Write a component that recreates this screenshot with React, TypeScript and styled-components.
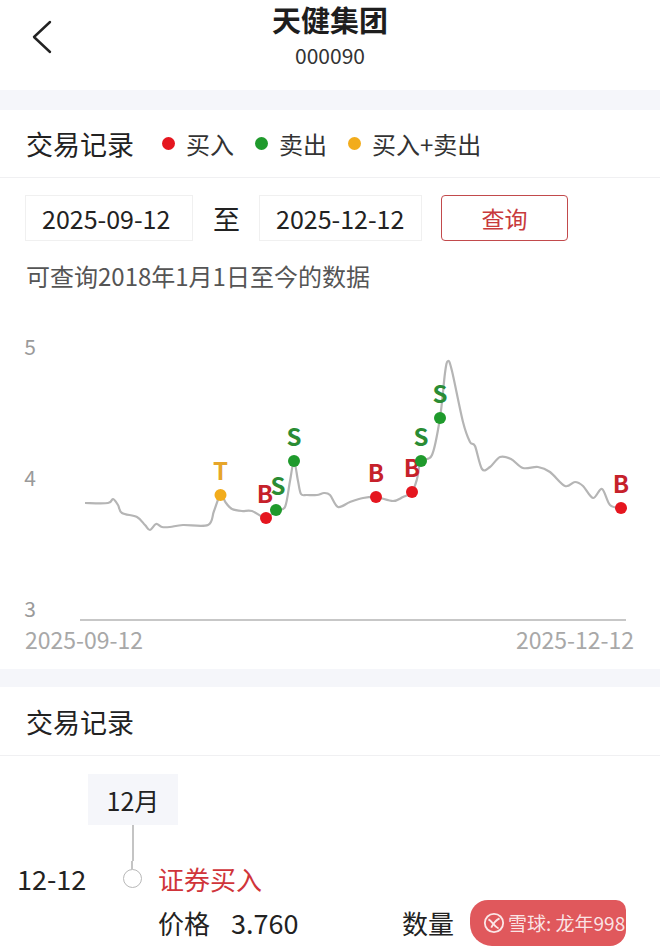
import { createGlobalStyle, styled } from 'styled-components';

const GlobalStyle = createGlobalStyle`
  body {
    margin: 0;
    background: #fff;
    font-family: "Noto Sans CJK SC", "Noto Sans", sans-serif;
    color: #222;
    overflow: hidden;
  }
`;

const Page = styled.div`
  width: 660px;
`;

const Header = styled.div`
  height: 90px;
  display: grid;
  grid-template-columns: 1fr auto 1fr;
  align-items: start;
`;

const Back = styled.div`
  padding: 20px 0 0 31px;
`;

const TitleBox = styled.div`
  display: flex;
  flex-direction: column;
  align-items: center;
  padding-top: 2px;
`;

const Title = styled.div`
  font-size: 29px;
  line-height: 34px;
  font-weight: 700;
  color: #1e1e1e;
`;

const Code = styled.div`
  font-size: 21px;
  line-height: 26px;
  margin-top: 6px;
  color: #333;
`;

const Band = styled.div<{ $h: number }>`
  height: ${(p) => p.$h}px;
  background: #f5f6fa;
`;

const SectionHead = styled.div<{ $h: number }>`
  height: ${(p) => p.$h}px;
  padding: 0 26px;
  display: flex;
  align-items: center;
  border-bottom: 1px solid #f0f0f2;
  box-sizing: border-box;
`;

const SectionTitle = styled.div`
  font-size: 27px;
  color: #222;
  margin-right: 28px;
`;

const Legend = styled.div`
  display: flex;
  align-items: center;
  margin-right: 21px;
  font-size: 24px;
  color: #333;
`;

const Dot = styled.span<{ $c: string }>`
  width: 13px;
  height: 13px;
  border-radius: 50%;
  background: ${(p) => p.$c};
  margin-right: 11px;
`;

const DateRow = styled.div`
  display: flex;
  align-items: center;
  padding: 17px 25px 0;
`;

const DateInput = styled.div<{ $w: number }>`
  width: ${(p) => p.$w}px;
  height: 46px;
  box-sizing: border-box;
  border: 1px solid #f0f0f0;
  display: flex;
  align-items: center;
  padding-left: 16px;
  font-size: 25px;
  color: #222;
`;

const To = styled.div`
  font-size: 27px;
  margin: 0 19px 0 20px;
  color: #222;
`;

const QueryButton = styled.button`
  margin-left: 19px;
  width: 127px;
  height: 46px;
  border: 1.5px solid #c24a4c;
  border-radius: 4px;
  background: #fff;
  color: #c83a3c;
  font-family: inherit;
  font-size: 23px;
`;

const Hint = styled.div`
  padding-left: 26px;
  margin-top: 18px;
  line-height: 34px;
  font-size: 24px;
  color: #555;
`;

const Chart = styled.svg`
  display: block;
`;

const Month = styled.div`
  margin: 18px 0 0 88px;
  width: 90px;
  height: 51px;
  background: #f5f6fa;
  display: flex;
  align-items: center;
  justify-content: center;
  font-size: 25px;
  color: #222;
`;

const Connector = styled.div`
  margin-left: 132px;
  width: 1.5px;
  height: 36px;
  background: #c4c4c4;
`;

const Item = styled.div`
  display: grid;
  grid-template-columns: 100px 30px 1fr;
  padding-left: 17px;
  font-size: 26px;
  line-height: 36px;
`;

const ItemDate = styled.div`
  color: #222;
  font-size: 27px;
`;

const Node = styled.div`
  height: 36px;
  display: flex;
  flex-direction: column;
  align-items: center;
  & > i {
    width: 1.5px;
    height: 8px;
    background: #c4c4c4;
  }
  & > b {
    width: 17px;
    height: 17px;
    border-radius: 50%;
    border: 1.5px solid #b8b8b8;
    background: #fff;
  }
`;

const ItemBody = styled.div`
  display: flex;
  flex-direction: column;
  gap: 3px;
  margin-left: 11px;
`;

const Action = styled.div`
  color: #d0343a;
`;

const Fields = styled.div`
  display: flex;
  align-items: center;
  color: #222;
`;

const Field = styled.div<{ $w?: number }>`
  display: flex;
  gap: 21px;
  width: ${(p) => (p.$w ? `${p.$w}px` : 'auto')};
  & > span:nth-child(2) {
    font-size: 27px;
  }
`;

const Redact = styled.div`
  position: relative;
  margin-left: 16px;
  width: 156px;
  height: 46px;
  background: #e0585c;
  border-radius: 18px 10px 16px 22px;
`;

const Watermark = styled.div`
  position: absolute;
  left: 13px;
  top: 8px;
  display: flex;
  align-items: center;
  gap: 3px;
  font-size: 19px;
  line-height: 30px;
  white-space: nowrap;
  color: rgba(255, 255, 255, 0.85);
`;

const pts: [number, number][] = [
  [85, 504], [108, 504], [113, 500], [118, 506], [122, 514], [137, 518], [145, 526],
  [150, 531], [156, 525], [162, 528], [170, 528], [183, 526], [208, 526], [214, 512],
  [220.5, 496], [226, 504], [232, 510], [242, 512], [252, 512], [266, 519], [276, 511],
  [285, 508], [290, 482], [294, 462], [298, 482], [301, 495], [307, 496], [317, 496],
  [324, 494], [330, 496], [338, 508], [350, 503], [363, 499], [376, 498], [393, 502], [403, 498],
  [412, 493], [417, 480], [421, 462], [432, 456], [440, 419], [445, 374], [448, 362],
  [452, 372], [463, 423], [470, 443], [475, 447], [482, 470], [490, 468], [500, 458],
  [511, 460], [523, 469], [538, 468], [550, 473], [565, 487], [575, 483], [583, 487],
  [593, 499], [602, 490], [610, 506], [621, 509],
];

const smooth = (p: [number, number][]) => {
  let d = `M${p[0][0]},${p[0][1]}`;
  for (let i = 0; i < p.length - 1; i++) {
    const p0 = p[i - 1] || p[i];
    const p1 = p[i];
    const p2 = p[i + 1];
    const p3 = p[i + 2] || p2;
    const c1x = p1[0] + (p2[0] - p0[0]) / 6;
    const c1y = p1[1] + (p2[1] - p0[1]) / 6;
    const c2x = p2[0] - (p3[0] - p1[0]) / 6;
    const c2y = p2[1] - (p3[1] - p1[1]) / 6;
    d += ` C${c1x.toFixed(1)},${c1y.toFixed(1)} ${c2x.toFixed(1)},${c2y.toFixed(1)} ${p2[0]},${p2[1]}`;
  }
  return d;
};

const colors = {
  B: { dot: '#e5161f', text: '#c6212b' },
  S: { dot: '#1f9a2c', text: '#2a8c34' },
  T: { dot: '#f2ac1c', text: '#e6a52a' },
};

const marks: { x: number; y: number; k: 'B' | 'S' | 'T'; lx?: number }[] = [
  { x: 220.5, y: 496, k: 'T' },
  { x: 266, y: 519, k: 'B', lx: 265 },
  { x: 276, y: 511, k: 'S', lx: 278 },
  { x: 294, y: 462, k: 'S' },
  { x: 376, y: 498, k: 'B' },
  { x: 412, y: 493, k: 'B' },
  { x: 421, y: 462, k: 'S' },
  { x: 440, y: 419, k: 'S' },
  { x: 621, y: 509, k: 'B' },
];

function PriceChart() {
  const font = '"Noto Sans CJK SC", sans-serif';
  return (
    <Chart width={660} height={376} viewBox="0 294 660 376">
      {[
        ['5', 347],
        ['4', 478],
        ['3', 609],
      ].map(([t, y]) => (
        <text key={t} x={30} y={y as number} fontSize={21} fill="#9a9a9a" textAnchor="middle" dominantBaseline="central" fontFamily={font}>
          {t}
        </text>
      ))}
      <line x1={80} y1={621} x2={626} y2={621} stroke="#b4b4b4" strokeWidth={1.5} />
      <text x={25} y={640} fontSize={23} fill="#a8a8a8" dominantBaseline="central" fontFamily={font}>
        2025-09-12
      </text>
      <text x={634} y={640} fontSize={23} fill="#a8a8a8" textAnchor="end" dominantBaseline="central" fontFamily={font}>
        2025-12-12
      </text>
      <path d={smooth(pts)} fill="none" stroke="#b5b5b5" strokeWidth={2.2} strokeLinejoin="round" />
      {marks.map((m, i) => (
        <g key={i}>
          <circle cx={m.x} cy={m.y} r={6} fill={colors[m.k].dot} />
          <text x={m.lx ?? m.x} y={m.y - 15} fontSize={24} fontWeight={700} fill={colors[m.k].text} textAnchor="middle" fontFamily={font}>
            {m.k}
          </text>
        </g>
      ))}
    </Chart>
  );
}

export default function App() {
  return (
    <Page>
      <GlobalStyle />
      <Header>
        <Back>
          <svg width="24" height="34" viewBox="0 0 24 34">
            <polyline points="19,2 3,17 19,32" fill="none" stroke="#222" strokeWidth="2.4" strokeLinecap="round" strokeLinejoin="round" />
          </svg>
        </Back>
        <TitleBox>
          <Title>天健集团</Title>
          <Code>000090</Code>
        </TitleBox>
        <div />
      </Header>
      <Band $h={20} />
      <SectionHead $h={68}>
        <SectionTitle>交易记录</SectionTitle>
        <Legend>
          <Dot $c="#e5161f" />
          买入
        </Legend>
        <Legend>
          <Dot $c="#1f9a2c" />
          卖出
        </Legend>
        <Legend>
          <Dot $c="#f2ac1c" />
          买入+卖出
        </Legend>
      </SectionHead>
      <DateRow>
        <DateInput $w={168}>2025-09-12</DateInput>
        <To>至</To>
        <DateInput $w={163}>2025-12-12</DateInput>
        <QueryButton>查询</QueryButton>
      </DateRow>
      <Hint>可查询2018年1月1日至今的数据</Hint>
      <PriceChart />
      <Band $h={18} />
      <SectionHead $h={69}>
        <SectionTitle>交易记录</SectionTitle>
      </SectionHead>
      <Month>12月</Month>
      <Connector />
      <Item>
        <ItemDate>12-12</ItemDate>
        <Node>
          <i />
          <b />
        </Node>
        <ItemBody>
          <Action>证券买入</Action>
          <Fields>
            <Field $w={244}>
              <span>价格</span>
              <span>3.760</span>
            </Field>
            <Field>
              <span>数量</span>
            </Field>
            <Redact>
              <Watermark>
                <svg width="22" height="22" viewBox="0 0 24 24">
                  <circle cx="12" cy="12" r="10" fill="none" stroke="rgba(255,255,255,0.85)" strokeWidth="2" />
                  <path d="M6 8 C10 10 12 16 17 18 M9 17 C11 13 14 9 18 7" fill="none" stroke="rgba(255,255,255,0.85)" strokeWidth="2" />
                </svg>
                雪球: 龙年998
              </Watermark>
            </Redact>
          </Fields>
        </ItemBody>
      </Item>
    </Page>
  );
}
